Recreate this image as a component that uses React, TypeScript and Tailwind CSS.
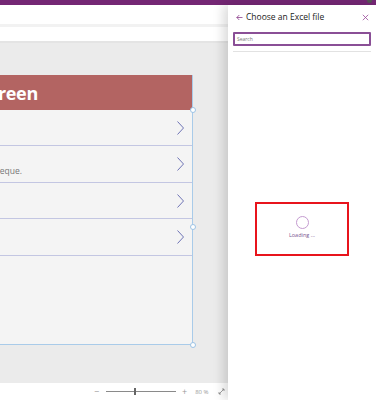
import React from "react";

function Chevron() {
  return (
    <svg width="9" height="16" viewBox="0 0 9 16" className="block">
      <polyline points="1.5,1.5 7.5,8 1.5,14.5" fill="none" stroke="#6f74b6" strokeWidth="1" />
    </svg>
  );
}

export default function App() {
  const rows = [
    { h: "h-[36px]", sub: "" },
    { h: "h-[37px]", sub: "Lorem ipsum dolor sit amet, neque." },
    { h: "h-[36px]", sub: "" },
    { h: "h-[37px]", sub: "" },
  ];
  return (
    <div
      className="w-[376px] h-[400px] overflow-hidden flex flex-col bg-white"
      style={{ fontFamily: '"Open Sans", "Liberation Sans", sans-serif' }}
    >
      <div className="h-[5px] bg-[#742774] shrink-0 flex justify-end pr-[4px]">
        <div className="w-[5px] h-[3px] bg-[#555] rounded-b-sm" />
      </div>
      <div className="flex flex-1 min-h-0">
        {/* main editor area */}
        <div className="flex-1 flex flex-col min-w-0">
          <div className="h-[19px] bg-white shrink-0" />
          <div className="h-[3px] bg-[#f2f2f2] shrink-0" />
          <div className="h-[14px] bg-white shrink-0" />
          <div className="h-[2px] bg-[#e4e4e4] shrink-0" />
          <div className="flex-1 bg-[#ebebeb] pt-[32px] relative">
            {/* screen */}
            <div className="w-[193px] h-[270px] bg-[#f4f4f4] border-r border-b border-[#a9cbe9] flex flex-col relative">
              <div className="h-[35px] bg-[#b36462] flex items-center shrink-0">
                <div className="w-[38px] flex justify-end whitespace-nowrap overflow-visible">
                  <span className="text-[18px] font-bold text-white leading-none tracking-[-0.3px]">Screen</span>
                </div>
              </div>
              {rows.map((r, i) => (
                <div
                  key={i}
                  className={`${r.h} shrink-0 border-b border-[#c3c6e2] flex items-center relative`}
                >
                  <div className="flex-1 self-end pb-[7px]">
                    {r.sub && (
                      <div className="w-[22px] flex justify-end whitespace-nowrap">
                        <span className="text-[8.5px] text-[#777] leading-none">{r.sub}</span>
                      </div>
                    )}
                  </div>
                  <div className="pr-[7px]">
                    <Chevron />
                  </div>
                </div>
              ))}
              <div className="absolute right-[-4px] top-[32px] w-[6px] h-[6px] rounded-full bg-white border border-[#9cc3e6]" />
              <div className="absolute right-[-4px] top-[149px] w-[6px] h-[6px] rounded-full bg-white border border-[#9cc3e6]" />
              <div className="absolute right-[-4px] bottom-[-4px] w-[6px] h-[6px] rounded-full bg-white border border-[#9cc3e6]" />
            </div>
          </div>
          <div className="h-[17px] bg-white shrink-0 flex items-center pl-[94px] text-[#9a9a9a]">
            <span className="text-[9px] leading-none w-[9px]">−</span>
            <div className="ml-[3px] w-[70px] h-[1px] bg-[#8a8a8a] relative">
              <div className="absolute left-[28px] top-[-3px] w-[2px] h-[7px] bg-[#666]" />
            </div>
            <span className="ml-[6px] text-[9px] leading-none">+</span>
            <span className="ml-[8px] text-[6px] leading-none">80 %</span>
            <svg className="ml-[9px]" width="7" height="7" viewBox="0 0 7 7">
              <path d="M1 6 L6 1 M4 1 H6 V3 M1 4 V6 H3" fill="none" stroke="#888" strokeWidth="0.8" />
            </svg>
          </div>
        </div>
        {/* right panel */}
        <div className="w-[148px] shrink-0 bg-white shadow-[-5px_0_10px_rgba(0,0,0,0.14)] relative flex flex-col px-[5px]">
          <div className="h-[27px] flex items-center pb-[3px]">
            <svg width="7" height="7" viewBox="0 0 7 7" className="ml-[3px]">
              <path d="M6.5 3.5 H0.8 M3.3 1 L0.8 3.5 L3.3 6" fill="none" stroke="#8b3d8b" strokeWidth="0.8" />
            </svg>
            <span className="ml-[3px] text-[8.5px] text-[#222] leading-none">Choose an Excel file</span>
            <div className="flex-1" />
            <svg width="7" height="7" viewBox="0 0 7 7" className="mr-[2px]">
              <path d="M0.8 0.8 L6.2 6.2 M6.2 0.8 L0.8 6.2" fill="none" stroke="#9a4a9a" strokeWidth="0.8" />
            </svg>
          </div>
          <div className="h-[14px] border-2 border-[#8a4f96] rounded-[1px] flex items-center pl-[2px]">
            <span className="text-[5px] text-[#777] leading-none">Search</span>
          </div>
          <div className="mt-[5px] h-[1px] bg-[#e2e2e2]" />
          <div className="mt-[150px] ml-[22px] w-[94px] h-[54px] border-2 border-[#e8141c] flex flex-col items-center pt-[12px]">
            <div className="w-[13px] h-[13px] rounded-full border border-[#c49bd0]" />
            <span className="mt-[4px] text-[5.5px] text-[#7a5590] leading-none">Loading ...</span>
          </div>
        </div>
      </div>
    </div>
  );
}
